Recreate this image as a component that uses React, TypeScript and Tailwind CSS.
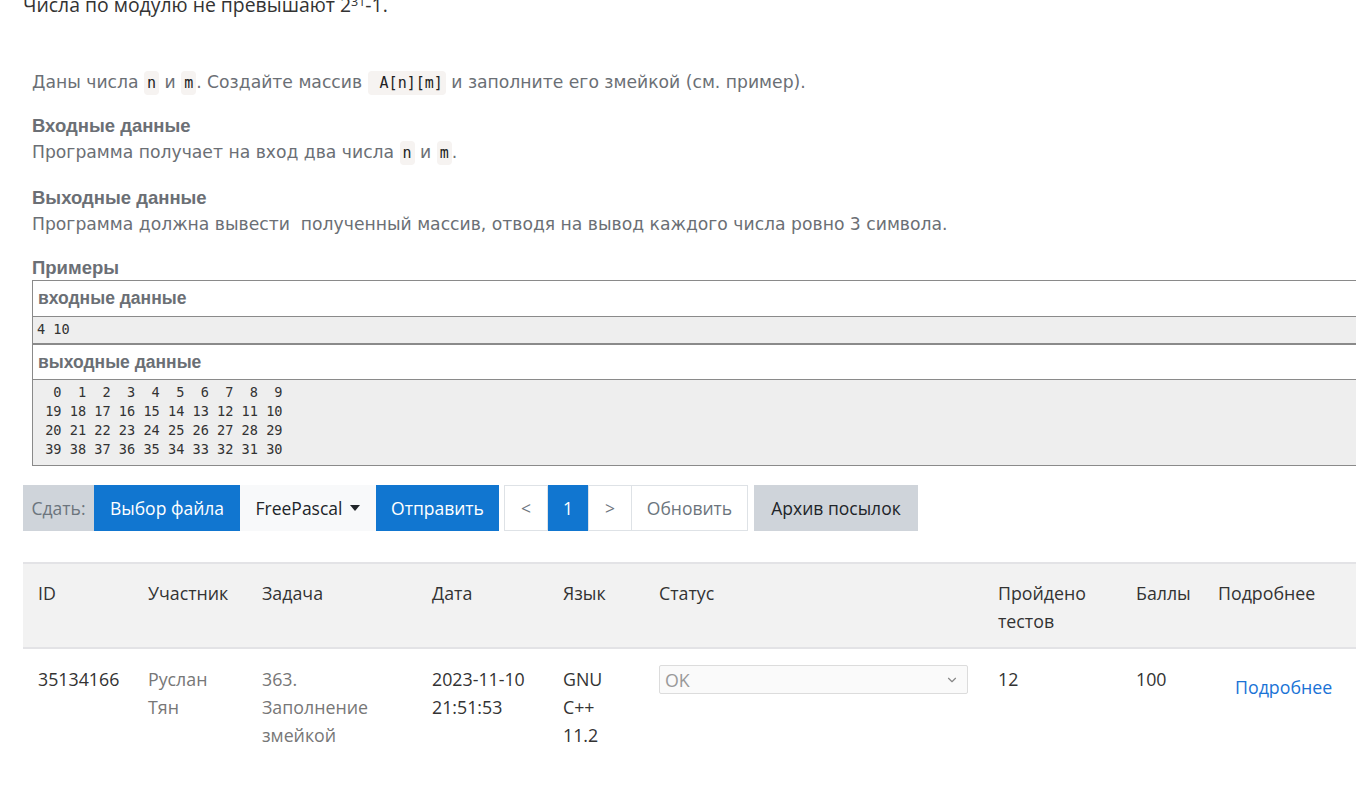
import { ChevronDown } from "lucide-react";

const snake = [
  "  0  1  2  3  4  5  6  7  8  9",
  " 19 18 17 16 15 14 13 12 11 10",
  " 20 21 22 23 24 25 26 27 28 29",
  " 39 38 37 36 35 34 33 32 31 30",
];

function Code({ children }: { children: React.ReactNode }) {
  return (
    <code className="rounded bg-[#f6f3f1] px-[3px] py-[3px] font-['DejaVu_Sans_Mono',monospace] text-[15px] text-[#222]">
      {children}
    </code>
  );
}

const headers = [
  { label: "ID", w: "w-[110px]" },
  { label: "Участник", w: "w-[114px]" },
  { label: "Задача", w: "w-[170px]" },
  { label: "Дата", w: "w-[131px]" },
  { label: "Язык", w: "w-[96px]" },
  { label: "Статус", w: "w-[339px]" },
  { label: "Пройдено тестов", w: "w-[138px]" },
  { label: "Баллы", w: "w-[82px]" },
  { label: "Подробнее", w: "flex-1" },
];

export default function App() {
  return (
    <div className="min-h-[790px] bg-white pl-[23px] font-['Open_Sans',sans-serif] text-[#333]">
      <p className="-mt-[7px] text-[19.4px] leading-[24px] text-[#333]">
        Числа по модулю не превышают 2<sup className="text-[12.5px]">31</sup>-1.
      </p>

      {/* Statement */}
      <div className="mt-[51px] pl-[9px] font-['DejaVu_Sans',Verdana,sans-serif] text-[17.2px] text-[#6b6f75]">
        <p className="leading-[28px]">
          Даны числа <Code>n</Code> и <Code>m</Code>. Создайте массив <Code>&nbsp;A[n][m]</Code> и заполните его змейкой (см. пример).
        </p>

        <h3 className="mt-[17px] font-['Liberation_Sans',Arial,sans-serif] text-[18.5px] font-bold leading-[24px] text-[#6b6f75]">
          Входные данные
        </h3>
        <p className="leading-[28px]">
          Программа получает на вход два числа <Code>n</Code> и <Code>m</Code>.
        </p>

        <h3 className="mt-[19px] font-['Liberation_Sans',Arial,sans-serif] text-[18.5px] font-bold leading-[24px] text-[#6b6f75]">
          Выходные данные
        </h3>
        <p className="leading-[28px]">
          Программа должна вывести&nbsp; полученный массив, отводя на вывод каждого числа ровно 3 символа.
        </p>

        <h3 className="mt-[18px] font-['Liberation_Sans',Arial,sans-serif] text-[18.5px] font-bold leading-[24px] text-[#6b6f75]">
          Примеры
        </h3>

        {/* Example */}
        <div className="mr-[-1px] border border-[#8a8a8a] font-['Liberation_Sans',Arial,sans-serif]">
          <div className="flex h-[35px] items-center bg-white px-[5px] text-[17.5px] font-bold text-[#6b6f75]">
            входные данные
          </div>
          <pre className="h-[27px] border-t border-[#8a8a8a] bg-[#eeeeee] px-[4px] pt-[3px] font-['DejaVu_Sans_Mono',monospace] text-[13.6px] leading-[19px] text-[#333]">
            4 10
          </pre>
          <div className="flex h-[36px] items-center border-t-2 border-[#8a8a8a] bg-white px-[5px] text-[17.5px] font-bold text-[#6b6f75]">
            выходные данные
          </div>
          <pre className="h-[86px] border-t border-[#8a8a8a] bg-[#eeeeee] px-[4px] pt-[3px] font-['DejaVu_Sans_Mono',monospace] text-[13.6px] leading-[19px] text-[#333]">
            {snake.join("\n")}
          </pre>
        </div>
      </div>

      {/* Submit bar */}
      <div className="mt-[19px] flex h-[46px] items-stretch text-[17.5px]">
        <div className="flex w-[71px] items-center justify-center bg-[#cfd4da] text-[#6c757d]">Сдать:</div>
        <button className="w-[146px] bg-[#1176d0] text-white">Выбор файла</button>
        <button className="flex w-[136px] items-center justify-center gap-[8px] bg-[#f8f9fa] text-[#212529]">
          FreePascal
          <span className="h-0 w-0 border-x-[5px] border-t-[6px] border-x-transparent border-t-[#212529]" />
        </button>
        <button className="w-[123px] bg-[#1176d0] text-white">Отправить</button>

        <div className="ml-[5px] flex items-stretch">
          <button className="w-[44px] border border-[#dee2e6] text-[#6c757d]">&lt;</button>
          <button className="w-[40px] bg-[#1176d0] text-white">1</button>
          <button className="w-[44px] border border-[#dee2e6] text-[#6c757d]">&gt;</button>
          <button className="w-[116px] border border-l-0 border-[#dee2e6] text-[#6c757d]">Обновить</button>
        </div>
        <button className="ml-[6px] w-[164px] bg-[#cfd4da] text-[#212529]">Архив посылок</button>
      </div>

      {/* Submissions table */}
      <div className="mt-[31px] text-[17.8px] leading-[28px]">
        <div className="flex h-[87px] border-t-2 border-b-2 border-[#e3e3e6] bg-[#f2f2f2] pl-[15px] pt-[15px]">
          {headers.map((h) => (
            <div key={h.label} className={`${h.w} pr-[12px]`}>
              {h.label}
            </div>
          ))}
        </div>
        <div className="flex pl-[15px] pt-[16px]">
          <div className="w-[110px]">35134166</div>
          <div className="w-[114px] pr-[24px] text-[#777]">Руслан Тян</div>
          <div className="w-[170px] pr-[40px] text-[#777]">363. Заполнение змейкой</div>
          <div className="w-[131px] pr-[8px]">2023-11-10 21:51:53</div>
          <div className="w-[96px] pr-[40px]">GNU C++ 11.2</div>
          <div className="w-[339px] pr-[30px]">
            <div className="flex h-[29px] items-center justify-between rounded-[2px] border border-[#dcdcdc] bg-[#fafafa] pl-[5px] pr-[8px] text-[#999]">
              OK
              <ChevronDown className="h-[14px] w-[14px] text-[#888]" strokeWidth={2} />
            </div>
          </div>
          <div className="w-[138px]">12</div>
          <div className="w-[82px]">100</div>
          <div className="flex-1 pl-[17px] pt-[8px]">
            <a className="text-[#1a73d6]">Подробнее</a>
          </div>
        </div>
      </div>
    </div>
  );
}
